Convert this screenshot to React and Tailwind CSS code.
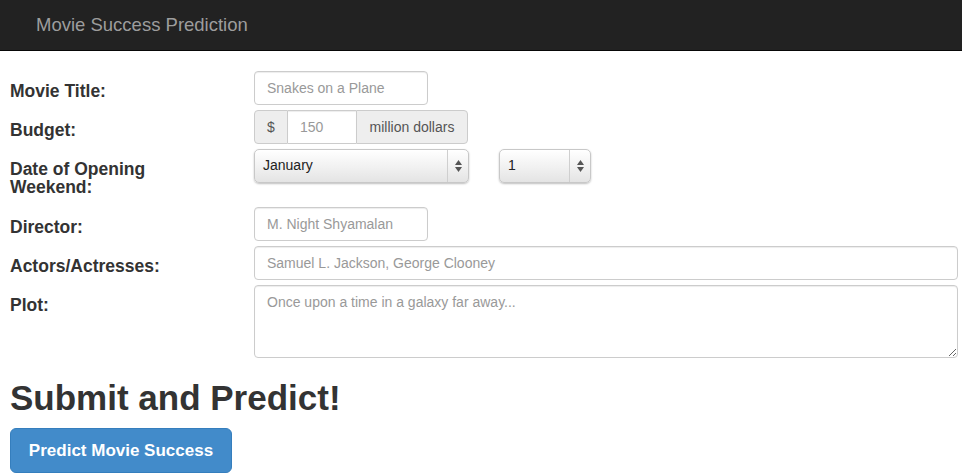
import React from "react";

const font = { fontFamily: '"Liberation Sans", Arial, sans-serif' };

const inputCls =
  "block h-[34px] px-3 text-[14px] text-[#555] bg-white border border-[#ccc] rounded-[4px] shadow-[inset_0_1px_1px_rgba(0,0,0,0.075)] outline-none placeholder:text-[#999]";

// Mac-style select box
const Select = ({value, width}) => (
  <div
    className={`${width} h-[34px] flex items-stretch rounded-[5px] border border-[#c8c8c8] bg-gradient-to-b from-[#ffffff] via-[#f2f2f2] to-[#e4e4e4] shadow-[0_1px_2px_rgba(0,0,0,0.25),inset_0_1px_0_#fff]`}
  >
    <span className="flex-1 pl-[8px] pt-[7px] text-[14px] leading-[16px] text-[#222]">
      {value}
    </span>
    <span className="w-[21px] flex flex-col items-center justify-center gap-[2px] border-l border-[#cfcfcf]">
      <svg width="7" height="5" viewBox="0 0 7 5">
        <path d="M3.5 0 L7 5 L0 5 Z" fill="#555" />
      </svg>
      <svg width="7" height="5" viewBox="0 0 7 5">
        <path d="M0 0 L7 0 L3.5 5 Z" fill="#555" />
      </svg>
    </span>
  </div>
);

const Row = ({label, children, className = ""}) => (
  <div className={`grid grid-cols-[244px_1fr] ${className}`}>
    <label className="block max-w-[170px] pt-[11px] pb-[4px] text-[17.5px] leading-[18px] font-bold text-[#333]">
      {label}
    </label>
    <div>{children}</div>
  </div>
);

export default function App() {
  return (
    <div className="w-[962px] h-[475px] bg-white overflow-hidden" style={font}>
      {/* Navbar */}
      <div className="h-[51px] bg-[#222] border-b border-[#080808] flex items-center pl-[36px]">
        <span className="text-[18.5px] text-[#9d9d9d] leading-[20px]">
          Movie Success Prediction
        </span>
      </div>

      <div className="pl-[10px] pr-[4px] pt-[20px]">
        <div className="flex flex-col gap-[5px]">
          <Row label="Movie Title:">
            <input className={`${inputCls} w-[174px]`} placeholder="Snakes on a Plane" />
          </Row>

          <Row label="Budget:">
            <div className="flex h-[34px] w-[214px] text-[14px]">
              <span className="w-[34px] flex items-center justify-center bg-[#eee] border border-[#ccc] rounded-l-[4px] text-[#555]">
                $
              </span>
              <input
                className="block w-[68px] h-[34px] px-3 border-y border-[#ccc] bg-white outline-none text-[14px] placeholder:text-[#999] shadow-[inset_0_1px_1px_rgba(0,0,0,0.075)]"
                placeholder="150"
              />
              <span className="flex-1 flex items-center justify-center bg-[#eee] border border-[#ccc] rounded-r-[4px] text-[#555]">
                million dollars
              </span>
            </div>
          </Row>

          <Row label="Date of Opening Weekend:" className="mb-[2px]">
            <div className="flex gap-[30px]">
              <Select value="January" width="w-[215px]" />
              <Select value="1" width="w-[92px]" />
            </div>
          </Row>

          <Row label="Director:">
            <input className={`${inputCls} w-[174px]`} placeholder="M. Night Shyamalan" />
          </Row>

          <Row label="Actors/Actresses:">
            <input
              className={`${inputCls} w-full`}
              placeholder="Samuel L. Jackson, George Clooney"
            />
          </Row>

          <Row label="Plot:">
            <textarea
              className="block w-full h-[73px] px-3 py-[6px] text-[14px] leading-[20px] text-[#555] bg-white border border-[#ccc] rounded-[4px] shadow-[inset_0_1px_1px_rgba(0,0,0,0.075)] outline-none placeholder:text-[#999]"
              placeholder="Once upon a time in a galaxy far away..."
            />
          </Row>
        </div>

        <h1 className="mt-[20px] text-[35px] leading-[40px] font-bold text-[#333]">
          Submit and Predict!
        </h1>

        <button className="mt-[10px] h-[45px] w-[222px] rounded-[6px] bg-[#428bca] border border-[#357ebd] text-white text-[17px] font-bold">
          Predict Movie Success
        </button>
      </div>
    </div>
  );
}
